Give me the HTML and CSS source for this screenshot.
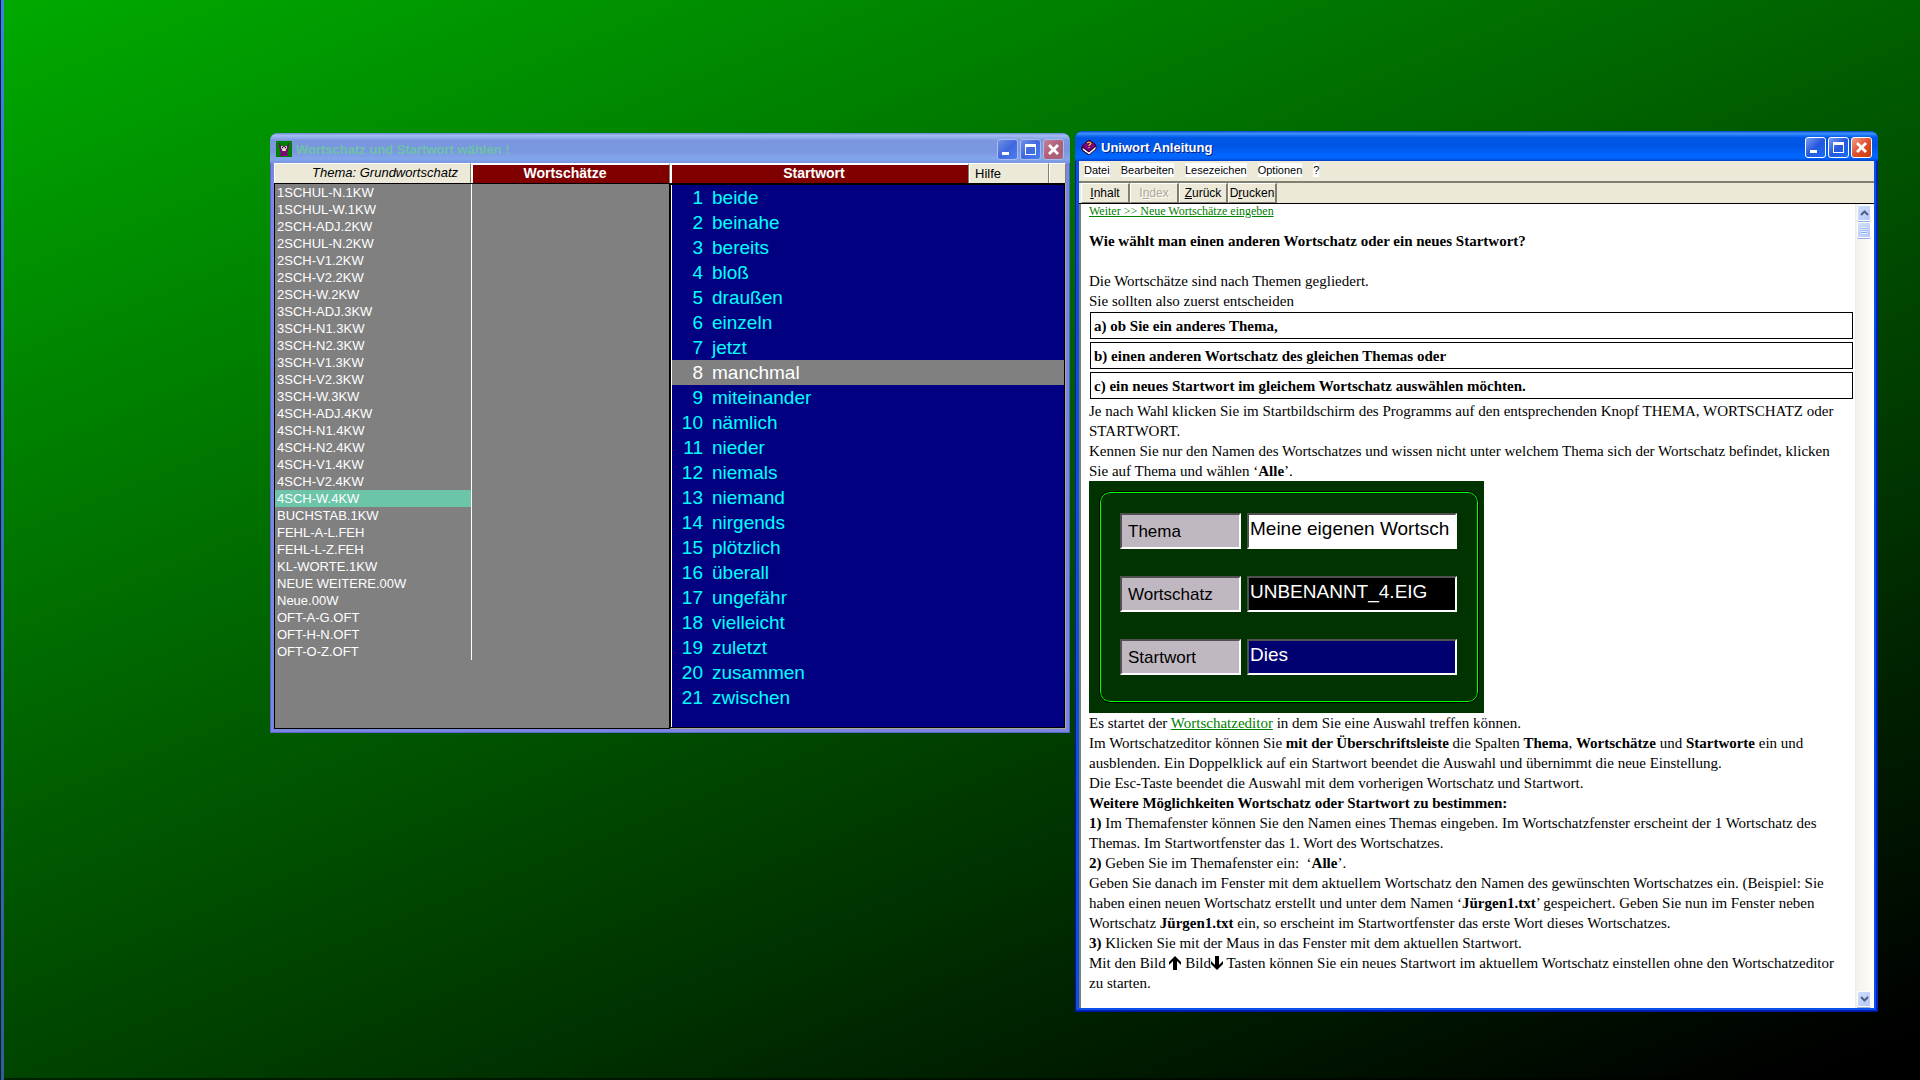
FILE: index.html
```html
<!DOCTYPE html>
<html lang="de">
<head>
    <meta charset="UTF-8">
    <meta name="viewport" content="width=device-width, initial-scale=1.0">
    <title>Uniwort</title>
    <link rel="stylesheet" href="styles.css">
</head>
<body>
    <div class="desktop">
        <section class="window chooser">
            <header class="titlebar">
                <svg class="app-icon" viewBox="0 0 16 16" shape-rendering="crispEdges">
                    <rect width="16" height="16" fill="#008000"/>
                    <path d="M3 2h1v2h1v1h6v-1h1v-2h1v5h-1v4h-1v2h1v2h-8v-2h1v-2h-1v-4h-1z" fill="#800080"/>
                    <path d="M5 5h2v1h2v-1h2v3h-1v2h-4v-2h-1z" fill="#c0c0c0"/>
                    <path d="M6 6h1v1h-1zM9 6h1v1h-1z" fill="#000"/>
                    <path d="M7 8h2v2h-2z" fill="#ffff80"/>
                </svg>
                <h1>Wortschatz und Startwort wählen !</h1>
                <button type="button" class="caption" aria-label="Minimieren"><svg viewBox="0 0 21 21"><path d="M5 13h7v3h-7z"/></svg></button>
                <button type="button" class="caption" aria-label="Maximieren"><svg viewBox="0 0 21 21"><path fill-rule="evenodd" d="M5 5h11v11h-11zM6 8v7h9v-7z"/></svg></button>
                <button type="button" class="caption close" aria-label="Schließen"><svg viewBox="0 0 21 21"><path d="M5 7l2-2 3.500 3.500 3.500-3.500 2 2-3.500 3.500 3.500 3.500-2 2-3.500-3.500-3.500 3.500-2-2 3.500-3.500z"/></svg></button>
            </header>
            <nav class="columns">
                <button type="button" class="thema">Thema: Grundwortschatz</button>
                <button type="button" class="red">Wortschätze</button>
                <button type="button" class="red">Startwort</button>
                <button type="button" class="help">Hilfe</button>
                <span class="filler"></span>
            </nav>
            <div class="lists">
                <div class="files">
                    <ul id="files"></ul>
                </div>
                <ol class="words" id="words"></ol>
            </div>
        </section>

        <section class="window manual">
            <header class="titlebar">
                <svg class="app-icon" viewBox="0 0 16 16">
                    <path d="M1 8l7 5 7-6v3l-7 6-7-5z" fill="#fff" stroke="#400040"/>
                    <path d="M1 7l7-6 7 5-7 7z" fill="#800080" stroke="#300030"/>
                    <path d="M1 8v3l7 5" fill="none" stroke="#300030"/>
                    <path d="M6 4l2-1 2 1v1l-2 1v1M8 8v1" fill="none" stroke="#ffff00"/>
                </svg>
                <h1>Uniwort Anleitung</h1>
                <button type="button" class="caption" aria-label="Minimieren"><svg viewBox="0 0 21 21"><path d="M5 13h7v3h-7z"/></svg></button>
                <button type="button" class="caption" aria-label="Maximieren"><svg viewBox="0 0 21 21"><path fill-rule="evenodd" d="M5 5h11v11h-11zM6 8v7h9v-7z"/></svg></button>
                <button type="button" class="caption close" aria-label="Schließen"><svg viewBox="0 0 21 21"><path d="M5 7l2-2 3.500 3.500 3.500-3.500 2 2-3.500 3.500 3.500 3.500-2 2-3.500-3.500-3.500 3.500-2-2 3.500-3.500z"/></svg></button>
            </header>
            <nav class="menu">
                <button type="button">Datei</button>
                <button type="button">Bearbeiten</button>
                <button type="button">Lesezeichen</button>
                <button type="button">Optionen</button>
                <button type="button">?</button>
            </nav>
            <div class="toolbar">
                <button type="button"><u>I</u>nhalt</button>
                <button type="button" disabled>I<u>n</u>dex</button>
                <button type="button"><u>Z</u>urück</button>
                <button type="button">D<u>r</u>ucken</button>
            </div>
            <div class="view">
                <article>
                    <p class="next"><a href="#">Weiter &gt;&gt; Neue Wortschätze eingeben</a></p>
                    <h2>Wie wählt man einen anderen Wortschatz oder ein neues Startwort?</h2>
                    <p>Die Wortschätze sind nach Themen gegliedert.<br>
                    Sie sollten also zuerst entscheiden</p>
                    <div class="choices">
                        <p>a) ob Sie ein anderes Thema,</p>
                        <p>b) einen anderen Wortschatz des gleichen Themas oder</p>
                        <p>c) ein neues Startwort im gleichem Wortschatz auswählen möchten.</p>
                    </div>
                    <p>Je nach Wahl klicken Sie im Startbildschirm des Programms auf den entsprechenden Knopf THEMA, WORTSCHATZ oder<br>
                    STARTWORT.<br>
                    Kennen Sie nur den Namen des Wortschatzes und wissen nicht unter welchem Thema sich der Wortschatz befindet, klicken<br>
                    Sie auf Thema und wählen ‘<b>Alle</b>’.</p>
                    <div class="figure">
                        <form class="panel">
                            <label for="thema">Thema</label>
                            <input type="text" id="thema" class="white" value="Meine eigenen Wortsch">
                            <label for="schatz">Wortschatz</label>
                            <input type="text" id="schatz" class="black" value="UNBENANNT_4.EIG">
                            <label for="start">Startwort</label>
                            <input type="text" id="start" class="navy" value="Dies">
                        </form>
                    </div>
                    <p>Es startet der <a href="#">Wortschatzeditor</a> in dem Sie eine Auswahl treffen können.<br>
                    Im Wortschatzeditor können Sie <b>mit der Überschriftsleiste</b> die Spalten <b>Thema</b>, <b>Wortschätze</b> und <b>Startworte</b> ein und<br>
                    ausblenden. Ein Doppelklick auf ein Startwort beendet die Auswahl und übernimmt die neue Einstellung.<br>
                    Die Esc-Taste beendet die Auswahl mit dem vorherigen Wortschatz und Startwort.<br>
                    <b>Weitere Möglichkeiten Wortschatz oder Startwort zu bestimmen:</b><br>
                    <b>1)</b> Im Themafenster können Sie den Namen eines Themas eingeben. Im Wortschatzfenster erscheint der 1 Wortschatz des<br>
                    Themas. Im Startwortfenster das 1. Wort des Wortschatzes.<br>
                    <b>2)</b> Geben Sie im Themafenster ein: &nbsp;‘<b>Alle</b>’.<br>
                    Geben Sie danach im Fenster mit dem aktuellem Wortschatz den Namen des gewünschten Wortschatzes ein. (Beispiel: Sie<br>
                    haben einen neuen Wortschatz erstellt und unter dem Namen ‘<b>Jürgen1.txt</b>’ gespeichert. Geben Sie nun im Fenster neben<br>
                    Wortschatz <b>Jürgen1.txt</b> ein, so erscheint im Startwortfenster das erste Wort dieses Wortschatzes.<br>
                    <b>3)</b> Klicken Sie mit der Maus in das Fenster mit dem aktuellen Startwort.<br>
                    Mit den Bild <svg class="key" viewBox="0 0 12 14"><path d="M6 0l6 6v3l-4-4v9h-4v-9l-4 4v-3z"/></svg> Bild<svg class="key" viewBox="0 0 12 14"><path d="M6 14l-6-6v-3l4 4v-9h4v9l4-4v3z"/></svg> Tasten können Sie ein neues Startwort im aktuellem Wortschatz einstellen ohne den Wortschatzeditor<br>
                    zu starten.</p>
                </article>
                <div class="scrollbar">
                    <button type="button" aria-label="Nach oben"><svg viewBox="0 0 15 16"><path d="M4 10l3.500-3.500 3.500 3.500"/></svg></button>
                    <div class="thumb"></div>
                    <button type="button" class="down" aria-label="Nach unten"><svg viewBox="0 0 15 16"><path d="M4 6l3.500 3.500 3.500-3.500"/></svg></button>
                </div>
            </div>
        </section>
    </div>

    <script>
        const files = [
            '1SCHUL-N.1KW', '1SCHUL-W.1KW', '2SCH-ADJ.2KW', '2SCHUL-N.2KW', '2SCH-V1.2KW', '2SCH-V2.2KW', '2SCH-W.2KW',
            '3SCH-ADJ.3KW', '3SCH-N1.3KW', '3SCH-N2.3KW', '3SCH-V1.3KW', '3SCH-V2.3KW', '3SCH-W.3KW',
            '4SCH-ADJ.4KW', '4SCH-N1.4KW', '4SCH-N2.4KW', '4SCH-V1.4KW', '4SCH-V2.4KW', '4SCH-W.4KW',
            'BUCHSTAB.1KW', 'FEHL-A-L.FEH', 'FEHL-L-Z.FEH', 'KL-WORTE.1KW', 'NEUE WEITERE.00W', 'Neue.00W',
            'OFT-A-G.OFT', 'OFT-H-N.OFT', 'OFT-O-Z.OFT'
        ];
        const words = [
            'beide', 'beinahe', 'bereits', 'bloß', 'draußen', 'einzeln', 'jetzt', 'manchmal', 'miteinander', 'nämlich',
            'nieder', 'niemals', 'niemand', 'nirgends', 'plötzlich', 'überall', 'ungefähr', 'vielleicht', 'zuletzt',
            'zusammen', 'zwischen'
        ];

        document.getElementById('files').innerHTML = files.map(name =>
            `<li${name === '4SCH-W.4KW' ? ' class="selected"' : ''}>${name}</li>`
        ).join('');
        document.getElementById('words').innerHTML = words.map((word, i) =>
            `<li${word === 'manchmal' ? ' class="selected"' : ''}><span>${i + 1}</span>${word}</li>`
        ).join('');
    </script>
</body>
</html>
```
FILE: styles.css
```css
* {
    box-sizing: border-box;
}
body {
    margin: 0;
    font-family: "Liberation Sans", Arial, sans-serif;
    font-size: 13px;
    color: #000;
}
h1, h2, p, ul, ol {
    margin: 0;
    padding: 0;
    list-style: none;
}
button {
    padding: 0;
    border: none;
    background: none;
    font: inherit;
    color: inherit;
}

/* desktop */
.desktop {
    position: relative;
    min-height: 100vh;
    overflow: hidden;
    background: linear-gradient(158deg, #00aa00, #000 97%);
    box-shadow: inset 0 -2px rgba(0, 0, 0, 0.5);
}
.desktop::before {
    content: "";
    position: absolute;
    top: 0;
    bottom: 0;
    left: 0;
    width: 3px;
    background: linear-gradient(#3a80e8, #306090);
    border-left: 1px solid #002030;
}
.window {
    position: absolute;
    display: flex;
    flex-direction: column;
    border-radius: 8px 8px 0 0;
}
.chooser {
    left: 270px;
    top: 133px;
    width: 800px;
    height: 600px;
    padding: 0 4px 4px;
    background: #7a86e0;
    box-shadow: inset 1px -1px #5868c8, inset -1px 0 #5060c0;
}
.manual {
    left: 1075px;
    top: 131px;
    width: 803px;
    height: 881px;
    padding: 0 4px 4px;
    background: #0a50e8;
    box-shadow: inset 1px -1px #0018a0, inset -2px -2px #0020b8;
}

/* title bars */
.titlebar {
    display: flex;
    align-items: center;
    gap: 2px;
    height: 30px;
    margin: 0 -4px;
    padding: 2px 6px 0;
    border-radius: 8px 8px 0 0;
    flex: none;
}
.chooser .titlebar {
    background: linear-gradient(#6a88d8, #a2bcf2 8%, #7b97e0 25%, #7b96e0 60%, #82a6ea 85%, #7b96e0);
}
.manual .titlebar {
    background: linear-gradient(#0848c8, #3a90ff 8%, #0058e6 22%, #0055e5 50%, #0066ff 80%, #0066ff 90%, #0040c8);
}
.app-icon {
    width: 16px;
    height: 16px;
}
.titlebar h1 {
    flex: 1;
    font-size: 13px;
    line-height: 18px;
    padding: 2px 0 0 2px;
}
.chooser h1 {
    color: #6cc3a8;
}
.manual h1 {
    color: #fff;
    text-shadow: 1px 1px #001a80;
}
.caption {
    width: 21px;
    height: 21px;
    border: 1px solid #fff;
    border-radius: 3px;
    background: linear-gradient(135deg, #7a9cf4, #2458dc 50%, #1a6cf8);
}
.caption svg {
    display: block;
    width: 21px;
    height: 21px;
    margin: -1px;
    fill: #fff;
}
.caption.close {
    background: linear-gradient(135deg, #f0a088, #e05030 50%, #cc3808);
}
.chooser .caption {
    border-color: #a8bcf0;
    background: linear-gradient(135deg, #7090e4, #4068e0 50%, #4880f0);
}
.chooser .caption.close {
    background: linear-gradient(135deg, #c08098, #b06078 50%, #a86078);
}

/* word chooser */
.columns {
    display: grid;
    grid-template-columns: 197fr 199fr 299fr 80fr 17fr;
    height: 20px;
    background: #ece9d8;
    flex: none;
}
.columns > * {
    border: 1px solid;
    border-color: #fff #808070 #808070 #fff;
    background: #ece9d8;
    line-height: 17px;
}
.columns .thema {
    padding: 0 12px 2px 0;
    font-style: italic;
    text-align: right;
}
.columns .red {
    padding: 0 12px 2px 0;
    border-top-width: 2px;
    border-left-width: 2px;
    background: #800000;
    color: #fff;
    font-size: 14px;
    font-weight: bold;
    line-height: 15px;
}
.columns .help {
    padding-left: 5px;
    text-align: left;
}
.lists {
    display: grid;
    grid-template-columns: 396fr 396fr;
    flex: 1;
    background: #aaa89c;
}
.files {
    border: 1px solid #000;
    background: #808080;
    color: #fff;
}
.files ul {
    width: 50%;
    border-right: 1px solid #fff;
}
.files li {
    padding-left: 2px;
    line-height: 17px;
    white-space: nowrap;
}
.files .selected {
    background: #6cc5a8;
}
.words {
    margin: 0 1px 1px 0;
    border: 1px solid #000;
    border-top-width: 2px;
    background: #000080;
    color: #00ffff;
    font-size: 19px;
    box-shadow: inset 1px 0 #fff;
}
.words li {
    display: flex;
    gap: 9px;
    margin-left: 1px;
    line-height: 25px;
}
.words span {
    width: 31px;
    text-align: right;
}
.words .selected {
    background: #808080;
    color: #fff;
}

/* manual */
.menu {
    display: flex;
    gap: 11px;
    height: 20px;
    padding: 2px 5px;
    background: #ece9d8;
    font-size: 11px;
    line-height: 13px;
    flex: none;
}
.menu button {
    height: 14px;
    background: #fff;
}
.toolbar {
    display: flex;
    height: 23px;
    padding-left: 2px;
    border-top: 2px solid #808070;
    border-bottom: 1px solid #000;
    background: #ece9d8;
    flex: none;
}
.toolbar button {
    width: 49px;
    border: 1px solid;
    border-color: #fff #808070 #808070 #fff;
    border-right-width: 2px;
    font-size: 12px;
}
.toolbar button:disabled {
    color: #aca899;
    text-shadow: 1px 1px #fff;
}
.view {
    display: flex;
    flex: 1;
    min-height: 0;
    border-left: 2px solid #808070;
    background: #fff;
}
article {
    flex: 1;
    min-width: 0;
    padding: 0 2px 0 8px;
    font-family: "Liberation Serif", "Times New Roman", serif;
    font-size: 15px;
    line-height: 20px;
    white-space: nowrap;
}
article a {
    color: #008000;
}
.next {
    font-size: 12px;
    line-height: 15px;
}
article h2 {
    margin: 12px 0 20px;
    font-size: 15px;
    line-height: 20px;
}
.choices {
    display: grid;
    gap: 3px;
    margin: 1px 0 2px 1px;
    font-weight: bold;
}
.choices p {
    padding: 4px 3px 2px;
    border: 1px solid #000;
    line-height: 19px;
}
.figure {
    width: 395px;
    padding: 11px 6px 11px 11px;
    background: #003300;
}
.panel {
    display: grid;
    grid-template-columns: 121px 210px;
    gap: 27px 6px;
    padding: 20px 19px 26px;
    border: 1px solid #00ff00;
    border-radius: 10px;
    outline: 1px solid #000;
    font-family: "Liberation Sans", Arial, sans-serif;
}
.panel label, .panel input {
    width: 100%;
    height: 36px;
    border: 2px solid;
    border-color: #505050 #fff #fff #505050;
}
.panel label {
    padding: 0 6px;
    background: #c0b8c0;
    font-size: 17px;
    line-height: 34px;
}
.panel input {
    padding: 0 0 4px 1px;
    font-family: inherit;
    font-size: 19px;
}
.panel .white {
    background: #fff;
}
.panel .black {
    background: #000;
    color: #fff;
}
.panel .navy {
    background: #000070;
    color: #fff;
}
.key {
    width: 12px;
    height: 14px;
    vertical-align: -2px;
}

/* scroll bar */
.scrollbar {
    display: flex;
    flex-direction: column;
    width: 18px;
    margin-right: 1px;
    padding: 1px 2px 1px 1px;
    border-left: 1px solid #eeede5;
    background: linear-gradient(90deg, #f3f1ec, #fefefb);
}
.scrollbar button, .thumb {
    height: 16px;
    border: 1px solid #fff;
    border-radius: 2px;
    background: linear-gradient(135deg, #d0defc, #b4c8f8);
    box-shadow: 0 1px #98b0d8;
}
.scrollbar svg {
    display: block;
    width: 15px;
    height: 16px;
    margin: -1px;
    fill: none;
    stroke: #4d6185;
    stroke-width: 2px;
}
.thumb {
    margin-top: 1px;
    padding: 4px 3px;
}
.thumb::before {
    content: "";
    display: block;
    height: 7px;
    background: repeating-linear-gradient(#eef4fe 0 1px, #8cb0f8 1px 2px);
}
.scrollbar .down {
    margin-top: auto;
}
```
